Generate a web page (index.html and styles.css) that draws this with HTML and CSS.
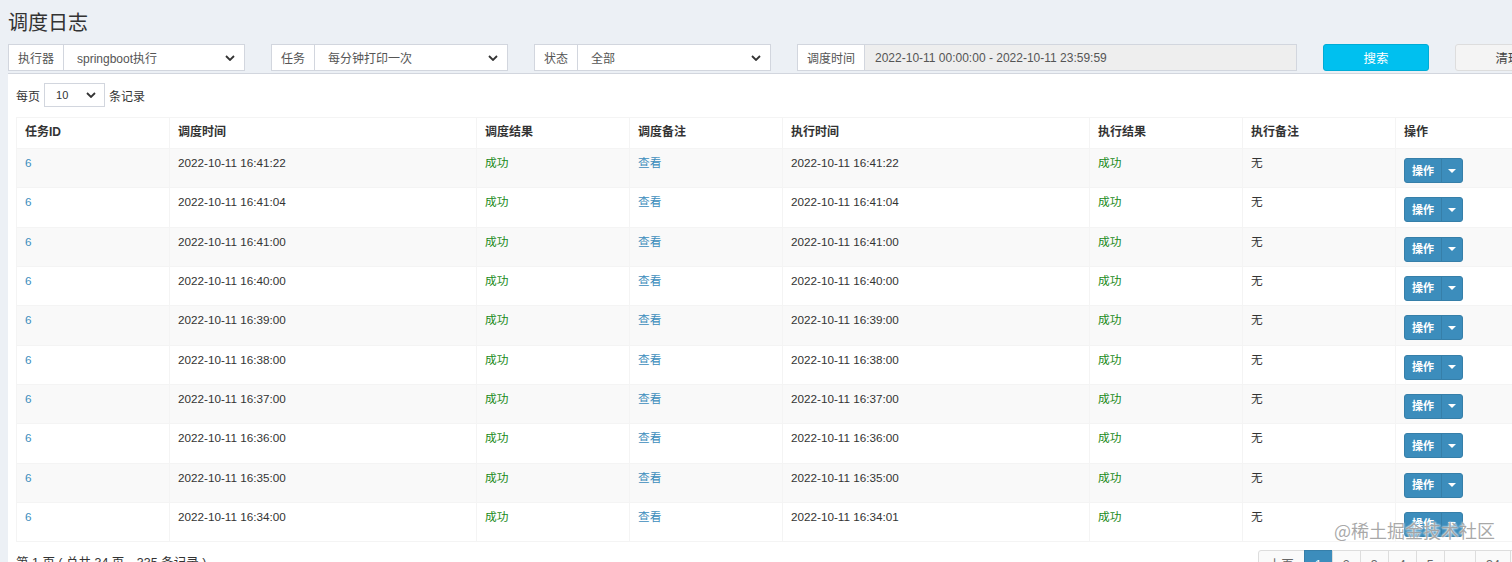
FILE: index.html
```html
<!DOCTYPE html>
<html>
  <head>
    <meta charset="utf-8" />
    <title>调度日志</title>
    <link rel="stylesheet" href="styles.css">
  </head>
  <body>
    <div class="page">
      <h1 class="page-title">调度日志</h1>

      <div class="filters">
        <div class="filter filter-sm">
          <span class="addon">执行器</span>
          <div class="select">
            <span>springboot执行</span>
            <svg class="chevron" width="10" height="6" viewBox="0 0 10 6"><path d="M1 1l4 4 4-4" fill="none" stroke="#333" stroke-width="1.8"/></svg>
          </div>
        </div>
        <div class="filter filter-sm">
          <span class="addon">任务</span>
          <div class="select">
            <span>每分钟打印一次</span>
            <svg class="chevron" width="10" height="6" viewBox="0 0 10 6"><path d="M1 1l4 4 4-4" fill="none" stroke="#333" stroke-width="1.8"/></svg>
          </div>
        </div>
        <div class="filter filter-sm">
          <span class="addon">状态</span>
          <div class="select">
            <span>全部</span>
            <svg class="chevron" width="10" height="6" viewBox="0 0 10 6"><path d="M1 1l4 4 4-4" fill="none" stroke="#333" stroke-width="1.8"/></svg>
          </div>
        </div>
        <div class="filter filter-lg">
          <span class="addon">调度时间</span>
          <div class="input readonly">2022-10-11 00:00:00 - 2022-10-11 23:59:59</div>
        </div>
        <button class="btn btn-info">搜索</button>
        <button class="btn btn-default">清理</button>
      </div>

      <div class="box">
        <div class="length">
          每页
          <div class="select select-sm">
            <span>10</span>
            <svg class="chevron" width="10" height="6" viewBox="0 0 10 6"><path d="M1 1l4 4 4-4" fill="none" stroke="#333" stroke-width="1.8"/></svg>
          </div>
          条记录
        </div>

        <table class="log-table">
          <thead>
            <tr>
              <th class="w1">任务ID</th>
              <th class="w2">调度时间</th>
              <th class="w1">调度结果</th>
              <th class="w1">调度备注</th>
              <th class="w2">执行时间</th>
              <th class="w1">执行结果</th>
              <th class="w1">执行备注</th>
              <th class="w1">操作</th>
            </tr>
          </thead>
          <tbody id="log-rows"></tbody>
        </table>

        <div class="table-footer">
          <div class="info">第 1 页 ( 总共 34 页，335 条记录 )</div>
          <ul class="pagination">
            <li><a>上页</a></li>
            <li class="active"><a>1</a></li>
            <li><a>2</a></li>
            <li><a>3</a></li>
            <li><a>4</a></li>
            <li><a>5</a></li>
            <li><a>...</a></li>
            <li><a>34</a></li>
            <li><a>下页</a></li>
          </ul>
        </div>
      </div>
    </div>

    <div class="watermark">@稀土掘金技术社区</div>

    <script>
      const logs = [
        ["16:41:22", "16:41:22"],
        ["16:41:04", "16:41:04"],
        ["16:41:00", "16:41:00"],
        ["16:40:00", "16:40:00"],
        ["16:39:00", "16:39:00"],
        ["16:38:00", "16:38:00"],
        ["16:37:00", "16:37:00"],
        ["16:36:00", "16:36:00"],
        ["16:35:00", "16:35:00"],
        ["16:34:00", "16:34:01"],
      ];

      const body = document.getElementById("log-rows");
      logs.forEach(([trigger, handle]) => {
        const tr = document.createElement("tr");
        tr.innerHTML = `
          <td><a class="link">6</a></td>
          <td>2022-10-11 ${trigger}</td>
          <td><span class="ok">成功</span></td>
          <td><a class="link">查看</a></td>
          <td>2022-10-11 ${handle}</td>
          <td><span class="ok">成功</span></td>
          <td>无</td>
          <td>
            <div class="btn-group">
              <span class="btn-main">操作</span>
              <span class="btn-caret"><i></i></span>
            </div>
          </td>`;
        body.appendChild(tr);
      });
    </script>
  </body>
</html>
```

FILE: styles.css
```css
html,
body {
  margin: 0;
  overflow: hidden;
}
body {
  background-color: #ecf0f5;
  color: #333;
  font-family: "Liberation Sans Narrow", "Liberation Sans", "Noto Sans CJK SC", sans-serif;
  font-size: 11.7px;
}
.page {
  padding: 0 0 0 8px;
  width: 1560px;
}
.page-title {
  margin: 0;
  padding-top: 10px;
  font-size: 20px;
  font-weight: normal;
  line-height: 24px;
  color: #333;
  font-family: "Noto Sans CJK SC", sans-serif;
}

/* filter bar */
.filters {
  display: flex;
  gap: 26px;
  margin-top: 10px;
  height: 27px;
}
.filter {
  display: flex;
  flex-shrink: 0;
  height: 27px;
}
.filter-sm {
  width: 237px;
}
.filter-lg {
  width: 500px;
}
.addon {
  display: flex;
  align-items: center;
  padding: 0 9px;
  background-color: #fff;
  border: 1px solid #d2d6de;
  color: #555;
  font-size: 12px;
}
.select {
  flex: 1;
  display: flex;
  align-items: center;
  justify-content: space-between;
  padding: 0 9px 0 13px;
  background-color: #fff;
  border: 1px solid #d2d6de;
  border-left: none;
  color: #555;
  font-size: 12px;
}
.input {
  flex: 1;
  display: flex;
  align-items: center;
  padding: 0 10px;
  border: 1px solid #d2d6de;
  border-left: none;
  color: #555;
  font-size: 12px;
}
.readonly {
  background-color: #eee;
}
.btn {
  flex-shrink: 0;
  width: 106px;
  height: 27px;
  border-radius: 3px;
  font-family: inherit;
  font-size: 12.5px;
  cursor: pointer;
}
.btn-info {
  background-color: #00c0ef;
  border: 1px solid #00acd6;
  color: #fff;
}
.btn-default {
  background-color: #f4f4f4;
  border: 1px solid #ddd;
  color: #444;
}

/* box */
.box {
  margin-top: 2px;
  padding: 9px 8px 0;
  background-color: #fff;
  border-top: 1px solid #d2d6de;
  width: 1533px;
  height: 600px;
}
.length {
  display: flex;
  align-items: center;
  gap: 4px;
  height: 24px;
  font-size: 12px;
}
.select-sm {
  flex: none;
  width: 61px;
  height: 24px;
  box-sizing: border-box;
  padding: 0 8px 0 11px;
  border: 1px solid #d2d6de;
  font-size: 11px;
  color: #333;
}

/* table */
.log-table {
  margin-top: 10px;
  width: 1533px;
  border-collapse: collapse;
  table-layout: fixed;
}
.log-table th {
  box-sizing: border-box;
}
.log-table .w1 {
  width: 153px;
}
.log-table .w2 {
  width: 307px;
}
.log-table th,
.log-table td {
  border: 1px solid #f4f4f4;
  text-align: left;
  vertical-align: top;
}
.log-table th {
  padding: 7px 8px 8px;
  line-height: 15px;
  font-size: 12px;
  font-weight: bold;
  color: #333;
}
.log-table tbody tr {
  height: 39.33px;
}
.log-table tbody tr:nth-child(odd) {
  background-color: #f9f9f9;
}
.log-table td {
  padding: 6px 8px 0;
  line-height: 16px;
}
.link {
  color: #3c8dbc;
  cursor: pointer;
}
.ok {
  color: #1a8a1a;
}

/* operation button */
.btn-group {
  display: inline-flex;
  margin-top: 3px;
  height: 25px;
  border-radius: 3px;
  background-color: #3c8dbc;
  border: 1px solid #367fa9;
  box-sizing: border-box;
  color: #fff;
}
.btn-main {
  display: flex;
  align-items: center;
  padding: 0 7px 0 7px;
  font-size: 11px;
  font-weight: bold;
}
.btn-caret {
  display: flex;
  align-items: center;
  justify-content: center;
  width: 20px;
  border-left: 1px solid #367fa9;
}
.btn-caret i {
  border-top: 4px solid #fff;
  border-left: 4px solid transparent;
  border-right: 4px solid transparent;
}

/* footer */
.table-footer {
  display: flex;
  justify-content: space-between;
  align-items: flex-start;
  margin-top: 8px;
}
.info {
  padding-top: 2px;
  font-size: 12.5px;
}
.pagination {
  display: flex;
  margin: 0 -8px 0 0;
  padding: 0;
  list-style: none;
}
.pagination a {
  display: block;
  padding: 6px 10px;
  margin-left: -1px;
  background-color: #fafafa;
  border: 1px solid #ddd;
  color: #666;
  line-height: 16px;
  min-width: 7px;
  text-align: center;
  font-size: 12.5px;
}
.pagination li:first-child a {
  border-radius: 3px 0 0 3px;
}
.pagination .active a {
  background-color: #3c8dbc;
  border-color: #367fa9;
  color: #fff;
}

.watermark {
  position: absolute;
  right: 17px;
  top: 517px;
  font-family: "Noto Sans CJK SC", sans-serif;
  font-size: 18px;
  color: rgba(140, 140, 140, 0.75);
  text-shadow: 0 0 2px #fff, 0 0 2px #fff;
}
```
